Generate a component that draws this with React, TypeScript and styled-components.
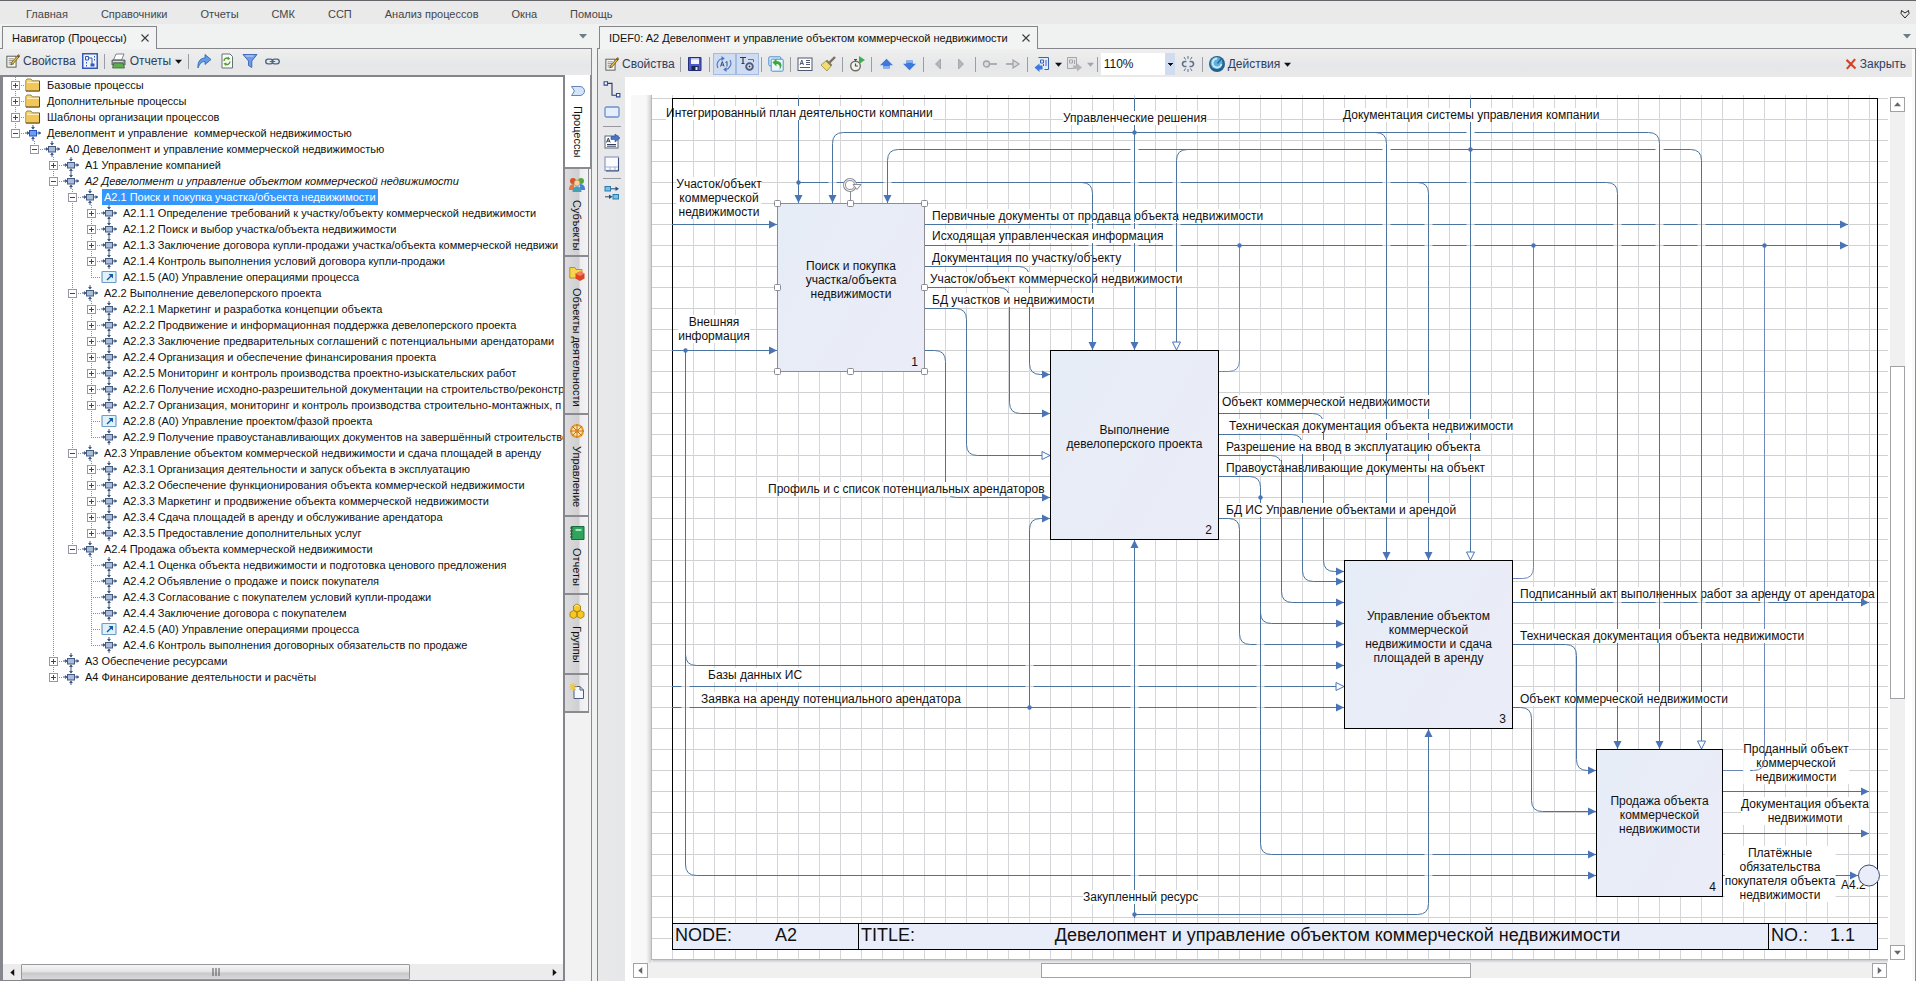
import React from "react";
import styled, { createGlobalStyle, css } from "styled-components";

const Global = createGlobalStyle`
  *, *::before, *::after { box-sizing: border-box; }
  html, body, #root { height: 100%; margin: 0; }
  body { overflow: hidden; background: #f0f0f0; }
  body, button, select { font-family: "Liberation Sans", Arial, sans-serif; font-size: 11px; color: #111; }
  button { border: 0; padding: 0; margin: 0; background: none; cursor: default; }
  svg { display: block; flex: none; }
`;

/* ---------- shell ---------- */

const Shell = styled.div`
  display: flex;
  flex-direction: column;
  height: 100vh;
  background: #f0f1f1;
`;

const MenuBar = styled.nav`
  display: flex;
  align-items: center;
  flex: none;
  height: 24px;
  padding: 2px 6px 0 10px;
  border-top: 1px solid #66666a;
  background: #e9eae9;
`;

const MenuItem = styled.button`
  padding: 0 17px 0 16px;
  line-height: 16px;
  color: #46464a;
`;

const MenuEnd = styled.button`
  margin-left: auto;
`;

const Workspace = styled.div`
  display: flex;
  flex: 1;
  gap: 5px;
  min-height: 0;
`;

const Dock = styled.section<{ $width?: number }>`
  display: flex;
  flex-direction: column;
  min-width: 0;
  min-height: 0;
  ${(p) => (p.$width ? css`flex: 0 0 ${p.$width}px;` : css`flex: 1;`)}
`;

const TabStrip = styled.div`
  display: flex;
  flex: none;
  height: 25px;
`;

const StripFill = styled.div<{ $lead?: boolean }>`
  display: flex;
  align-items: center;
  justify-content: flex-end;
  border-bottom: 1px solid #86868a;
  padding-right: 5px;
  ${(p) => (p.$lead ? css`width: 2px; flex: none; padding: 0;` : css`flex: 1;`)}
`;

const DockTab = styled.div`
  display: flex;
  align-items: center;
  gap: 14px;
  margin-top: 2px;
  padding: 0 7px 0 9px;
  border: 1px solid #86868a;
  border-bottom: 0;
  background: #f2f3f3;
  white-space: nowrap;
`;

const DockBody = styled.div`
  display: flex;
  flex-direction: column;
  flex: 1;
  min-height: 0;
  border-right: 1px solid #8a8a90;
`;

const DiagramBody = styled(DockBody)`
  border-left: 1px solid #86868a;
  padding-right: 3px;
  background: #fafafa;
`;

/* ---------- toolbars ---------- */

const Toolbar = styled.div<{ $tall?: boolean }>`
  display: flex;
  align-items: center;
  flex: none;
  height: ${(p) => (p.$tall ? 28 : 26)}px;
  padding: ${(p) => (p.$tall ? "2px 3px 0 4px" : "0 4px 2px 3px")};
  background: linear-gradient(#efefef, #e6e7e8 60%, #e9e9ea);
`;

const Tool = styled.button<{ $on?: boolean }>`
  display: flex;
  align-items: center;
  justify-content: center;
  width: 23px;
  height: 22px;
  ${(p) => p.$on && css`background: #cfdcf1; border: 1px solid #a3bde2;`}
`;

const TextTool = styled.button`
  display: flex;
  align-items: center;
  gap: 3px;
  padding: 0 3px;
  font-size: 12px;
  line-height: 22px;
  color: #2e4061;
`;

const CaretSlot = styled.span`
  display: flex;
  justify-content: center;
  width: 9px;
`;

const Rule = styled.span`
  width: 1px;
  height: 15px;
  margin: 0 3px 0 2px;
  background: #9c9ca2;
`;

const Push = styled.span`
  flex: 1;
`;

const Zoom = styled.select`
  appearance: none;
  width: 74px;
  height: 22px;
  margin-right: 2px;
  padding: 0 12px 0 3px;
  border: 0;
  border-radius: 0;
  font-size: 12px;
  background:
    linear-gradient(#111, #111) 67px 10px / 5px 1px no-repeat,
    linear-gradient(#111, #111) 68px 11px / 3px 1px no-repeat,
    linear-gradient(#111, #111) 69px 12px / 1px 1px no-repeat,
    linear-gradient(#d0dcf0, #d0dcf0) 64px 0 / 10px 100% no-repeat,
    #fff;
`;

/* ---------- navigator ---------- */

const NavRow = styled.div`
  display: flex;
  flex: 1;
  min-height: 0;
`;

const TreePane = styled.div`
  display: flex;
  flex-direction: column;
  flex: 1;
  min-width: 0;
  border: solid #85858d;
  border-width: 2px 2px 1px 3px;
  background: #fff;
`;

const TreeList = styled.div`
  flex: 1;
  overflow: hidden;
  padding-left: 3px;
`;

const Row = styled.div`
  display: flex;
  align-items: center;
  height: 16px;
  white-space: nowrap;
`;

const Guide = styled.span<{ $line: "full" | "half" | "none"; $stub?: boolean }>`
  display: flex;
  align-items: center;
  justify-content: center;
  flex: none;
  width: 19px;
  height: 16px;
  background:
    repeating-linear-gradient(#8c8c94 0 1px, transparent 1px 2px) 9px 0 / 1px
      ${(p) => (p.$line === "full" ? "16px" : p.$line === "half" ? "8px" : "0")} no-repeat,
    repeating-linear-gradient(90deg, #8c8c94 0 1px, transparent 1px 2px) 9px 8px /
      ${(p) => (p.$stub ? "10px" : "0")} 1px no-repeat;
`;

const Expander = styled.button<{ $open: boolean }>`
  width: 9px;
  height: 9px;
  border: 1px solid #9797a8;
  background:
    linear-gradient(#44445c, #44445c) center / 5px 1px no-repeat,
    linear-gradient(#44445c, #44445c) center / 1px ${(p) => (p.$open ? "0" : "5px")} no-repeat,
    #fff;
`;

const RowLabel = styled.span<{ $selected?: boolean; $italic?: boolean }>`
  margin-left: 4px;
  padding: 0 2px;
  line-height: 16px;
  white-space: pre;
  font-style: ${(p) => (p.$italic ? "italic" : "normal")};
  ${(p) => p.$selected && css`background: #3497fc; color: #fff;`}
`;

const SideTabs = styled.div`
  display: flex;
  flex-direction: column;
  flex: none;
  width: 26px;
  background: #f2f2f3;
`;

const SideTab = styled.button<{ $active?: boolean; $height: number }>`
  display: flex;
  align-items: center;
  gap: 7px;
  flex: none;
  writing-mode: vertical-rl;
  width: ${(p) => (p.$active ? 26 : 24)}px;
  height: ${(p) => p.$height}px;
  padding-top: 8px;
  border: solid #8a8a90;
  border-width: 0 1px 2px 0;
  line-height: 20px;
  background: ${(p) => (p.$active ? "#fff" : "linear-gradient(90deg, #dcdcde, #cfcfd2 62%, #ececee 64%, #f4f4f5)")};
`;

/* ---------- scroll bars ---------- */

const HScroll = styled.div`
  display: flex;
  flex: none;
  height: 16px;
  background: #ececed;
`;

const FlatButton = styled.button`
  display: grid;
  place-items: center;
  flex: none;
  width: 18px;
`;

const NavThumb = styled.div`
  display: grid;
  place-items: center;
  flex: 0 1 389px;
  border: 1px solid #98989c;
  border-radius: 1px;
  background: linear-gradient(#f5f5f5, #e6e6e6 45%, #c9c9cb 60%, #d9d9db);
`;

const BoxButton = styled.button`
  display: grid;
  place-items: center;
  flex: none;
  width: 15px;
  height: 15px;
  border: 1px solid #a2a2a6;
  background: #fff;
`;

const CanvasHScroll = styled.div`
  display: flex;
  flex: none;
  height: 15px;
  margin: 0 25px 3px 8px;
  background: #f0f0f1;
`;

const CanvasVScroll = styled.div`
  display: flex;
  flex-direction: column;
  flex: none;
  width: 15px;
  margin: 2px 7px 3px 2px;
  background: #f0f0f1;
`;

const Track = styled.div<{ $grow: number }>`
  flex: ${(p) => p.$grow} 1 0;
`;

const BoxThumb = styled.div<{ $grow: number }>`
  flex: ${(p) => p.$grow} 1 0;
  border: 1px solid #a2a2a6;
  background: #fff;
`;

/* ---------- diagram ---------- */

const CanvasRow = styled.div`
  display: flex;
  flex: 1;
  min-height: 0;
`;

const Palette = styled.div`
  display: flex;
  flex-direction: column;
  align-items: center;
  flex: none;
  width: 27px;
  background: linear-gradient(90deg, #e9e9eb, #e6e7e9);
`;

const PaletteTool = styled.button`
  display: grid;
  place-items: center;
  width: 23px;
  height: 23px;
`;

const PaletteRule = styled.span`
  width: 18px;
  height: 1px;
  margin: 3px 0 2px;
  background: #98989e;
`;

const Canvas = styled.div`
  display: flex;
  flex-direction: column;
  flex: 1;
  min-width: 0;
  padding-top: 18px;
  background: #fff;
`;

const SheetRow = styled.div`
  display: flex;
  flex: 1;
  min-height: 0;
`;

const SheetArea = styled.div`
  flex: 1;
  min-width: 0;
  margin-left: 6px;
  padding-left: 20px;
  overflow: hidden;
  background: linear-gradient(90deg, #f8f8f8 0 15px, #d8d8da 20px, #fff 20px);
`;

/* The sheet carries its own coordinate space; its top-left corner is (651, 95). */
const OX = 651;
const OY = 95;

const Sheet = styled.div`
  position: relative;
  width: 1238px;
  height: 865px;
  padding: 3px 0 0 21px;
  border-bottom: 1px solid #b4b4b8;
  box-shadow: 0 2px 3px #c8c8cc;
  background:
    linear-gradient(90deg, #b9b9bd 1px, transparent 1px) 0 0 / 100% 100% no-repeat,
    linear-gradient(90deg, #d5d6da 1px, transparent 1px) 0 0 / 21px 21px,
    linear-gradient(#cfd1d3 1px, transparent 1px) 0 3px / 21px 21px,
    #fff;
`;

const Frame = styled.div`
  display: flex;
  flex-direction: column;
  justify-content: flex-end;
  width: 1206px;
  height: 852px;
  border: 1px solid #000;
`;

const TitleBlock = styled.div`
  display: grid;
  grid-template-columns: 185px 1fr 109px;
  height: 26px;
  border-top: 1px solid #000;
  background: #e9edf9;
  font-size: 18px;
  line-height: 22px;
`;

const TitleCell = styled.div`
  display: flex;
  padding-left: 2px;
  & + & { border-left: 1px solid #000; }
`;

const TitleValue = styled.span<{ $after?: number }>`
  flex: 1;
  text-align: center;
  padding-right: ${(p) => p.$after || 0}px;
`;

const Layer = styled.svg`
  position: absolute;
  left: 0;
  top: 0;
  pointer-events: none;
`;

const Node = styled.div<{ $x: number; $y: number; $w: number; $h: number; $selected?: boolean }>`
  position: absolute;
  left: ${(p) => p.$x - OX}px;
  top: ${(p) => p.$y - OY}px;
  width: ${(p) => p.$w}px;
  height: ${(p) => p.$h}px;
  display: flex;
  flex-direction: column;
  border: 1px solid ${(p) => (p.$selected ? "#8c8c94" : "#000")};
  background: linear-gradient(120deg, #e6edf7, #ebecf8);
  font-size: 12px;
  line-height: 14px;
  text-align: center;
`;

const NodeText = styled.span`
  display: grid;
  place-content: center;
  flex: 1;
  white-space: pre-line;
`;

const NodeNumber = styled.span`
  height: 16px;
  padding-right: 6px;
  text-align: right;
`;

const FlowLabel = styled.span<{ $x: number; $y: number; $center?: boolean; $clear?: boolean }>`
  position: absolute;
  left: ${(p) => p.$x - OX}px;
  top: ${(p) => p.$y - OY}px;
  ${(p) => p.$center && css`transform: translateX(-50%); text-align: center;`}
  background: ${(p) => (p.$clear ? "transparent" : "#fff")};
  font-size: 12px;
  line-height: 14px;
  white-space: pre;
`;

/* ---------- icons ---------- */

type IconProps = { s?: number; children: React.ReactNode };
const Svg = ({ s = 16, children }: IconProps) => (
  <svg width={s} height={s} viewBox="0 0 16 16" fill="none" aria-hidden="true">{children}</svg>
);

const Caret = ({ c = "#111", dir = "down", s = 7 }: { c?: string; dir?: "down" | "up" | "left" | "right"; s?: number }) => {
  const d = { down: "M0 2H8L4 6.5Z", up: "M0 6H8L4 1.5Z", left: "M6 0V8L1.5 4Z", right: "M2 0V8L6.5 4Z" }[dir];
  return <svg width={s} height={s} viewBox="0 0 8 8" aria-hidden="true"><path d={d} fill={c} /></svg>;
};

const CloseX = () => (
  <svg width="8" height="8" viewBox="0 0 8 8" aria-hidden="true"><path d="M.5.5 7.5 7.5M7.5.5.5 7.5" stroke="#3c3c40" strokeWidth="1.1" /></svg>
);

const PropsIcon = () => (
  <Svg s={14}>
    <rect x="1" y="2.5" width="10.5" height="12.5" fill="#f6f6f2" stroke="#4c4c48" />
    <path d="M3 5.5h6M3 7.5h5M3 9.5h4M3 11.5h6" stroke="#8b8b80" />
    <path d="M14.6.6 6.5 9.5l-1 3 2.800-1.400L15.500 2.500Z" fill="#e6c043" stroke="#4d4420" strokeWidth=".8" />
    <path d="m13 1.800 2 2" stroke="#7a4a2a" strokeWidth="1.600" />
  </Svg>
);

const SchemeIcon = () => (
  <Svg>
    <rect x=".75" y=".75" width="14.500" height="14.500" fill="#f0f4fd" stroke="#3458b8" strokeWidth="1.500" />
    <path d="M3.500 3.500h3v3.500h-3ZM6.500 5H10v6" stroke="#3458b8" />
    <path d="M8.500 10.500h4v3h-4Z" fill="#3458b8" />
    <path d="M12.500 3v1.500M12.500 6v1.500M4.500 9v1.500M4.500 12v1.500" stroke="#3458b8" />
  </Svg>
);

const PrintIcon = () => (
  <Svg>
    <path d="M5 1h8l-2.500 6H2.500Z" fill="#fff" stroke="#667" strokeWidth=".8" />
    <path d="M1 7h13v5H1Z" fill="#8f979c" stroke="#4c5257" strokeWidth=".8" />
    <path d="M3 10h9l1.500 5H1.500Z" fill="#5cae4c" stroke="#3c6c34" strokeWidth=".8" />
    <path d="M2 8.500h10" stroke="#d6dadd" />
  </Svg>
);

const ForwardIcon = () => (
  <Svg><path d="M2 15C1.500 9 4 5 9 5V1.500l6 5-6 5V8.500C5.500 8.500 3.500 11 2 15Z" fill="#5f9be6" stroke="#2c5fae" strokeWidth=".8" /></Svg>
);

const RefreshDocIcon = () => (
  <Svg>
    <path d="M3 1h8l2.500 2.500V15H3Z" fill="#fafcf6" stroke="#66707a" />
    <path d="M5 8a3 3 0 0 1 4.500-2.500M11 8.500a3 3 0 0 1-4.500 2.500" stroke="#4d9c2c" strokeWidth="1.400" />
    <path d="M9 3.500 11.500 6 8.500 7ZM7 13 4.500 10.500 7.500 9.500Z" fill="#4d9c2c" />
  </Svg>
);

const FunnelIcon = () => (
  <Svg><path d="M1 1.500h14L9.800 8v6.500L6.500 12.500V8Z" fill="#6f9ce8" stroke="#3c62b4" strokeWidth=".9" /><path d="M3.500 3h8" stroke="#c8dafa" /></Svg>
);

const ChainIcon = () => (
  <Svg s={15}>
    <rect x=".8" y="5.500" width="7.500" height="5" rx="2.500" stroke="#4c6488" strokeWidth="1.500" />
    <rect x="7.700" y="5.500" width="7.500" height="5" rx="2.500" stroke="#4c6488" strokeWidth="1.500" />
    <path d="M5 8h6" stroke="#4c6488" />
  </Svg>
);

const SaveIcon = () => (
  <Svg>
    <path d="M1.500 1.500h12.500v13H1.500Z" fill="#4c5cc8" stroke="#252f7c" />
    <path d="M4 2h8v6H4Z" fill="#f5f6fc" /><path d="M4 2h8v1.500H4Z" fill="#b6bcec" />
    <path d="M4.500 10h7v4.500h-7Z" fill="#1c2452" /><path d="M8.500 11h2v3h-2Z" fill="#e8eaf6" />
  </Svg>
);

const AutoNumberIcon = () => (
  <Svg>
    <path d="M6 2.500A6.500 6.500 0 0 0 2 12M10 13.500A6.500 6.500 0 0 0 14 4" stroke="#4776c8" strokeWidth="1.100" />
    <path d="M5.500 0 8.800 2.500 5.500 5ZM10.500 11 7.200 13.500 10.500 16Z" fill="#4776c8" />
    <path d="m4.500 10.500 1.800-5 1.800 5M5 9h2.600M9.500 6.500l1.500-1v5" stroke="#34507e" strokeWidth="1" />
  </Svg>
);

const TextGearIcon = () => (
  <Svg>
    <path d="M1 1.500h6M4 1.500v6M2.500 7.500h3" stroke="#333a48" strokeWidth="1.200" />
    <circle cx="10.500" cy="10.500" r="3.300" fill="#eef2fb" stroke="#4c5d80" strokeWidth="2" />
    <circle cx="10.500" cy="10.500" r="1" fill="#26344f" />
    <path d="M9 3.500h5.500V6" stroke="#4776c8" />
  </Svg>
);

const SwapIcon = () => (
  <Svg>
    <rect x=".8" y=".8" width="12" height="9" rx="1" fill="#d8ebfb" stroke="#4c92ce" />
    <rect x="3.200" y="3.200" width="12" height="12" rx="1" fill="#eff7fe" stroke="#4c92ce" />
    <path d="M11.500 14c1-4-.5-6-3-6v2.500L4.500 6.500 8.500 2.500V5c4.500 0 7 4 3 9Z" fill="#3ea63a" />
  </Svg>
);

const TextFrameIcon = () => (
  <Svg>
    <rect x="1" y="2" width="14" height="12.500" fill="#fff" stroke="#4c5a70" />
    <path d="m3 9 1.800-5L6.500 9M3.500 7.500h2.500M9 4.500h4M9 6.500h4M9 8.500h4M3 11.500h10" stroke="#3f4c66" strokeWidth=".9" />
  </Svg>
);

const BrushIcon = () => (
  <Svg>
    <path d="M15 1 9.500 6.500" stroke="#7d6f5c" strokeWidth="2.400" />
    <path d="M6.500 4.500 11.500 9.500 7 15 1 9Z" fill="#f0dc72" stroke="#9c8a34" strokeWidth=".8" />
    <path d="m6.500 4.500 5 5" stroke="#77756c" strokeWidth="1.800" />
  </Svg>
);

const TimerIcon = () => (
  <Svg>
    <circle cx="6.500" cy="10" r="4.800" fill="#f3f3f0" stroke="#6c6c66" strokeWidth="1.400" />
    <path d="M5 3.500h3M6.500 3.500V5M6.500 7.500V10h2.500" stroke="#4c4c48" strokeWidth="1.200" />
    <path d="M10 0v8l6-4Z" fill="#3fae4c" />
  </Svg>
);

const UpIcon = () => <Svg s={13}><path d="M8 1 16 9h-4v4H4V9H0Z" fill="#3d78dc" /><path d="M4 10h8v3H4Z" fill="#8ab2ee" /></Svg>;
const DownIcon = () => <Svg s={13}><path d="M8 15 16 7h-4V3H4v4H0Z" fill="#3d78dc" /><path d="M4 3h8v3H4Z" fill="#8ab2ee" /></Svg>;
const BackIcon = () => <Svg><path d="M10.500 3v10L5.500 8Z" fill="#b4b4ba" stroke="#98989e" strokeWidth=".7" /></Svg>;
const NextIcon = () => <Svg><path d="M5.500 3v10l5-5Z" fill="#b4b4ba" stroke="#98989e" strokeWidth=".7" /></Svg>;
const StartIcon = () => <Svg><circle cx="4.500" cy="8" r="3" fill="#dcdcde" stroke="#a0a0a6" strokeWidth="1.300" /><path d="M7.500 8H15" stroke="#a0a0a6" strokeWidth="1.600" /></Svg>;
const EndIcon = () => <Svg><path d="M1 8h7" stroke="#a0a0a6" strokeWidth="1.600" /><path d="M8 4v8l6-4Z" fill="#dcdcde" stroke="#a0a0a6" strokeWidth="1.200" /></Svg>;

const ImportIcon = () => (
  <Svg>
    <path d="M4.500 1.500h10v12h-4" fill="#e4ebfa" stroke="#3c62b4" />
    <path d="M6.500 4h3v3h-3ZM12 4v6M9.500 8v2" stroke="#3c62b4" />
    <path d="M8.500 9.500v4h-3V16L.5 11.500 5.500 7.500v2Z" fill="#3d78dc" />
  </Svg>
);

const ExportIcon = () => (
  <Svg>
    <path d="M1.500 1.500h9v11h-9Z" fill="#e4e4e6" stroke="#a4a4aa" />
    <path d="M3.500 4h3v3h-3ZM8.500 4v4" stroke="#a4a4aa" />
    <path d="M7 9.500h4V7.500l5 4-5 4v-2.500H7Z" fill="#b4b4ba" />
  </Svg>
);

const UnlinkIcon = () => (
  <Svg>
    <path d="M6.500 5.500H5a2.500 2.500 0 0 0 0 5h1.500M9.500 10.500H11a2.500 2.500 0 0 0 0-5H9.500" stroke="#5c7090" strokeWidth="1.600" />
    <path d="M8 0v3M4 1l1.500 2.500M12 1l-1.500 2.500M8 16v-3M4 15l1.500-2.500M12 15l-1.500-2.500" stroke="#5c7090" />
  </Svg>
);

const GlobeIcon = () => (
  <Svg>
    <circle cx="8" cy="8" r="8" fill="#24618f" /><circle cx="7.500" cy="7" r="6" fill="#5fb0da" />
    <path d="M8 2.500A4.500 4.500 0 1 0 12.500 8" stroke="#cfe8f5" strokeWidth="1.800" /><path d="M12 3 8.500 7.500" stroke="#276a9c" strokeWidth="1.500" />
  </Svg>
);

const RedXIcon = () => <Svg s={12}><path d="M2 2.500 14 14M13.500 1.500 2.500 14.500" stroke="#cf4326" strokeWidth="2.800" /></Svg>;

const ConnectorIcon = () => <Svg s={18}><path d="M4.500 3H8v10.500h4" stroke="#2c3c60" /><path d="M1 1.500h3v3H1ZM12 12h3v3h-3Z" fill="#fff" stroke="#2c4c94" /></Svg>;
const BlockIcon = () => <Svg><rect x="1" y="3" width="14" height="10" rx="1.500" fill="#e4eeff" stroke="#6c90cc" strokeWidth="1.300" /></Svg>;
const RelabelIcon = () => (
  <Svg>
    <rect x="1" y="3" width="13" height="12" fill="#fff" stroke="#59657a" />
    <path d="m2.500 9.500 1.800-4.500 1.800 4.500M3 8.200h2.500M3 11.500h9M3 13.200h9" stroke="#333f58" />
    <path d="M7 3.500h4V1l5 4-5 4V6.500H7Z" fill="#4577cc" stroke="#244a90" strokeWidth=".6" />
  </Svg>
);
const StampIcon = () => <Svg><rect x="1" y="1" width="13.500" height="13.500" fill="#f9fbff" stroke="#8c9cc0" strokeWidth="1.200" /><path d="M1 11h13.500M6 11v3.500M11 11v3.500" stroke="#a4b0c8" /><path d="M14.500 2v13H2" stroke="#3c4c78" /></Svg>;
const LinkBoxesIcon = () => (
  <Svg>
    <rect x="1" y="1.500" width="5.500" height="4.500" fill="#7cc0e4" stroke="#2a7cac" /><path d="M7 3.800h6" stroke="#2c4c7c" /><path d="m11.500 1.500 3.500 2.300-3.500 2.300Z" fill="#2c4c7c" />
    <rect x="9" y="9.500" width="5.500" height="4.500" fill="#7cc0e4" stroke="#2a7cac" /><path d="M1 11.800h5" stroke="#2c4c7c" /><path d="m5 9.500 3.500 2.300L5 14Z" fill="#2c4c7c" />
  </Svg>
);

const FolderIcon = () => (
  <Svg>
    <path d="M.8 3.500 2 2h4l1.200 1.800H14.500V14H.8Z" fill="#f6d774" stroke="#8a6a24" strokeWidth=".8" />
    <path d="M1.500 5.500h12.500v8H1.500Z" fill="#f2c75a" /><path d="M14.500 4v10H1" stroke="#5c4618" />
    <path d="M2 5.500h12" stroke="#fdf0bc" />
  </Svg>
);

const ProcessIcon = ({ root }: { root?: boolean }) => (
  <Svg>
    <path d="M8 0v4M8 12v4M0 8h4M12 8h4" stroke="#3b5688" />
    <path d="M6 2h4L8 4.500ZM6 14h4l-2-2.500ZM2 6v4l2.500-2ZM13.500 6v4L16 8Z" fill="#3b5688" />
    <rect x="4.500" y="5.500" width="7" height="5.500" fill={root ? "#6f9cf0" : "#a8bcdc"} stroke={root ? "#2452c0" : "#46587c"} />
  </Svg>
);

const RefIcon = () => (
  <Svg>
    <rect x="1" y="2.500" width="14" height="11" rx=".8" fill="#dff1fb" stroke="#6f9cc4" strokeWidth="1.200" />
    <path d="M6 11 10.500 6.500" stroke="#145ca0" strokeWidth="1.400" /><path d="M7.500 5h4.500v4.500Z" fill="#145ca0" />
  </Svg>
);

const ChevronDocIcon = () => <Svg><path d="M1.500 3.500H10C13 3.500 14.500 6 14.500 8s-1.500 4.500-4.500 4.500H1.500L4.500 8Z" fill="#d4e4fa" stroke="#6484b8" /></Svg>;
const PeopleIcon = () => (
  <Svg>
    <circle cx="4" cy="4" r="3" fill="#d8542c" /><circle cx="12" cy="4" r="3" fill="#54a83c" />
    <path d="M0 12c0-4 3-5 5-5v6H0Z" fill="#e8743c" /><path d="M16 12c0-4-3-5-5-5v6h5Z" fill="#4c80d8" />
    <circle cx="8" cy="6" r="3" fill="#f6d2a0" stroke="#b08040" strokeWidth=".6" />
    <path d="M3.500 15c0-4 2-5.500 4.500-5.500s4.500 1.500 4.500 5.500Z" fill="#44a0b8" />
  </Svg>
);
const ObjectsIcon = () => (
  <Svg>
    <path d="M.8 2.500h5L7 4.500h6V13H.8Z" fill="#f8d44c" stroke="#b08a1c" strokeWidth=".9" />
    <path d="m11 6.500 4.500 2v5L11 16l-4.500-2.500v-5Z" fill="#dc4424" /><path d="m11 6.500 4.500 2L11 11 6.500 8.500Z" fill="#f4805c" />
  </Svg>
);
const WheelIcon = () => (
  <Svg><circle cx="8" cy="8" r="6" fill="#fce6b0" stroke="#e89a2c" strokeWidth="2" /><path d="M8 1v14M1 8h14M3 3l10 10M13 3 3 13" stroke="#c8701c" /><circle cx="8" cy="8" r="1.800" fill="#d8801c" /></Svg>
);
const BookIcon = () => <Svg><path d="M2.500 1.500H15v13H2.500Z" fill="#2fa45c" stroke="#176c38" /><path d="M6.500 4h6v2h-6Z" fill="#a8e4bc" /><path d="M1 3h3M1 6h3M1 9h3M1 12h3" stroke="#3c4c44" /></Svg>;
const GroupsIcon = () => (
  <Svg><path d="m8 1 3.500 2v4L8 9 4.500 7V3ZM4.500 7.500 8 9.500v4L4.500 15.500 1 13.500v-4ZM11.500 7.500 15 9.500v4l-3.500 2-3.500-2v-4Z" fill="#f6c822" stroke="#a8800c" strokeWidth=".9" /><path d="M5.500 3.500 8 2l2 1.500" stroke="#fdeea0" /></Svg>
);
const NewPageIcon = () => (
  <Svg><path d="M5 3.500h6l3.500 3.500v8.500H5Z" fill="#f4f8ff" stroke="#4c5c80" /><path d="M14.500 7H11V3.500" stroke="#4c5c80" /><path d="M4 0v8M0 4h8M1.200 1.200l5.600 5.600M6.800 1.200 1.200 6.800" stroke="#f0c83c" strokeWidth="1.200" /></Svg>
);

/* ---------- data ---------- */

type Kind = "folder" | "root" | "process" | "ref";
type Item = { t: string; k?: Kind; leaf?: boolean; sel?: boolean; it?: boolean; kids?: Item[] };

const closed = (t: string): Item => ({ t });
const leaf = (t: string): Item => ({ t, leaf: true });
const ref = (t: string): Item => ({ t, leaf: true, k: "ref" });

const TREE: Item[] = [
  { t: "Базовые процессы", k: "folder" },
  { t: "Дополнительные процессы", k: "folder" },
  { t: "Шаблоны организации процессов", k: "folder" },
  {
    t: "Девелопмент и управление  коммерческой недвижимостью", k: "root", kids: [
      {
        t: "A0 Девелопмент и управление коммерческой недвижимостью", kids: [
          closed("A1 Управление компанией"),
          {
            t: "A2 Девелопмент и управление объектом коммерческой недвижимости", it: true, kids: [
              {
                t: "A2.1 Поиск и покупка участка/объекта недвижимости", sel: true, kids: [
                  closed("A2.1.1 Определение требований к участку/объекту коммерческой недвижимости"),
                  closed("A2.1.2 Поиск и выбор участка/объекта недвижимости"),
                  closed("A2.1.3 Заключение договора купли-продажи участка/объекта коммерческой недвижи"),
                  closed("A2.1.4 Контроль выполнения условий договора купли-продажи"),
                  ref("A2.1.5 (A0) Управление операциями процесса"),
                ],
              },
              {
                t: "A2.2 Выполнение девелоперского проекта", kids: [
                  closed("A2.2.1 Маркетинг и разработка концепции объекта"),
                  closed("A2.2.2 Продвижение и информационная поддержка девелоперского проекта"),
                  closed("A2.2.3 Заключение предварительных соглашений с потенциальными арендаторами"),
                  closed("A2.2.4 Организация и обеспечение финансирования проекта"),
                  closed("A2.2.5 Мониторинг и контроль производства проектно-изыскательских работ"),
                  closed("A2.2.6 Получение исходно-разрешительной документации на строительство/реконстр"),
                  closed("A2.2.7 Организация, мониторинг и контроль производства строительно-монтажных, п"),
                  ref("A2.2.8 (A0) Управление проектом/фазой проекта"),
                  leaf("A2.2.9 Получение правоустанавливающих документов на завершённый строительство"),
                ],
              },
              {
                t: "A2.3 Управление объектом коммерческой недвижимости и сдача площадей в аренду", kids: [
                  closed("A2.3.1 Организация деятельности и запуск объекта в эксплуатацию"),
                  closed("A2.3.2 Обеспечение функционирования объекта коммерческой недвижимости"),
                  closed("A2.3.3 Маркетинг и продвижение объекта коммерческой недвижимости"),
                  closed("A2.3.4 Сдача площадей в аренду и обслуживание арендатора"),
                  closed("A2.3.5 Предоставление дополнительных услуг"),
                ],
              },
              {
                t: "A2.4 Продажа объекта коммерческой недвижимости", kids: [
                  leaf("A2.4.1 Оценка объекта недвижимости и подготовка ценового предложения"),
                  leaf("A2.4.2 Объявление о продаже и поиск покупателя"),
                  leaf("A2.4.3 Согласование с покупателем условий купли-продажи"),
                  leaf("A2.4.4 Заключение договора с покупателем"),
                  ref("A2.4.5 (A0) Управление операциями процесса"),
                  leaf("A2.4.6 Контроль выполнения договорных обязательств по продаже"),
                ],
              },
            ],
          },
          closed("A3 Обеспечение ресурсами"),
          closed("A4 Финансирование деятельности и расчёты"),
        ],
      },
    ],
  },
];

const kindIcon = (k?: Kind) =>
  k === "folder" ? <FolderIcon /> : k === "ref" ? <RefIcon /> : <ProcessIcon root={k === "root"} />;

const Branch = ({ items, trail = [] }: { items: Item[]; trail?: boolean[] }) => (
  <>
    {items.map((n, i) => {
      const last = i === items.length - 1;
      return (
        <React.Fragment key={n.t}>
          <Row role="treeitem" aria-level={trail.length + 1} aria-selected={!!n.sel}>
            {trail.map((on, j) => <Guide key={j} $line={on ? "full" : "none"} />)}
            <Guide $line={last ? "half" : "full"} $stub>
              {!n.leaf && <Expander $open={!!n.kids} aria-label={n.kids ? "Свернуть" : "Развернуть"} />}
            </Guide>
            {kindIcon(n.k)}
            <RowLabel $selected={n.sel} $italic={n.it}>{n.t}</RowLabel>
          </Row>
          {n.kids && <Branch items={n.kids} trail={[...trail, !last]} />}
        </React.Fragment>
      );
    })}
  </>
);

const SIDE = [
  { t: "Процессы", h: 94, icon: <ChevronDocIcon /> },
  { t: "Субъекты", h: 88, icon: <PeopleIcon /> },
  { t: "Объекты деятельности", h: 158, icon: <ObjectsIcon /> },
  { t: "Управление", h: 102, icon: <WheelIcon /> },
  { t: "Отчеты", h: 78, icon: <BookIcon /> },
  { t: "Группы", h: 80, icon: <GroupsIcon /> },
];

/* ---------- diagram geometry ---------- */

const LINE = "#4a749f";
const SOFT = "#6f86bd";
const HEAD = "#4a74b6";
const R = 11;

/* Horizontal run from a to b, broken by a small gap at every crossing. */
const run = (y: number, a: number, b: number, gaps: number[] = []) => {
  let d = `M${a} ${y}`;
  gaps.forEach((g) => { d += `H${g - 4}M${g + 4} ${y}`; });
  return d + `H${b}`;
};

/* Right from (a, y1), rounded turn down at x, rounded turn right at y2, on to b. */
const step = (a: number, y1: number, x: number, y2: number, b: number, gaps: number[] = []) =>
  `M${a} ${y1}H${x - R}Q${x} ${y1} ${x} ${y1 + R}V${y2 - R}Q${x} ${y2} ${x + R} ${y2}` + run(y2, x + R, b, gaps);

/* Branch leaving a horizontal line at y and dropping at x; side -1 comes from the left. */
const drop = (y: number, x: number, to: number, side = -1) => `M${x + side * R} ${y}Q${x} ${y} ${x} ${y + R}V${to}`;

/* Branch leaving a vertical line at x and running right along y. */
const peel = (x: number, y: number, b: number, gaps: number[] = []) =>
  `M${x} ${y - R}Q${x} ${y} ${x + R} ${y}` + run(y, x + R, b, gaps);

const DOWNS = [1092.5, 1134.5, 1176.5, 1386.5, 1428.5, 1470.5, 1617.5, 1659.5, 1701.5];

const FLOWS = [
  "M798.5 98V203",
  "M1134.5 98V350",
  "M1470.5 98V560",
  run(182.5, 798.5, 1617.5 - R, [832.5, 887.5, 1134.5, 1176.5, 1386.5, 1470.5]),
  drop(182.5, 1092.5, 350), drop(182.5, 1428.5, 560), drop(182.5, 1617.5, 749),
  run(132.5, 832.5 + R, 1659.5 - R, [1470.5]),
  drop(132.5, 832.5, 203, 1), drop(132.5, 1386.5, 560), drop(132.5, 1659.5, 749),
  run(149.5, 887.5 + R, 1701.5 - R, [1134.5, 1386.5, 1659.5]),
  drop(149.5, 887.5, 203, 1), drop(149.5, 1176.5, 350, 1), drop(149.5, 1701.5, 749),
  run(224.5, 672, 777), run(350.5, 672, 777),
  "M685.5 350V865", peel(685.5, 665.5, 1344, [1029.5, 1134.5, 1260.5]), peel(685.5, 875.5, 1596, [1134.5, 1428.5]),
  run(686.5, 672, 1344, [685.5, 1029.5, 1134.5, 1260.5]),
  run(707.5, 672, 1344, [685.5, 1134.5, 1260.5]),
  `M1029.5 707V529.5Q1029.5 518.5 1040.5 518.5H1050`,
  "M1134.5 918V540",
  `M1134 914.5H${1428.5 - R}Q1428.5 914.5 1428.5 903.5V729`,
  run(224.5, 925, 1848, DOWNS), run(245.5, 925, 1848, DOWNS),
  step(925, 266.5, 1029.5, 374.5, 1050), step(925, 287.5, 1009.5, 413.5, 1050),
  step(925, 308.5, 966.5, 455.5, 1050), step(925, 350.5, 945.5, 497.5, 1050),
  step(1219, 413.5, 1323.5, 571.5, 1344), step(1219, 434.5, 1302.5, 581.5, 1344),
  step(1219, 455.5, 1281.5, 602.5, 1344), step(1219, 476.5, 1260.5, 854.5, 1596, [1428.5]),
  peel(1260.5, 623.5, 1344), step(1219, 518.5, 1239.5, 644.5, 1344, [1260.5]),
  run(602.5, 1513, 1869, [1617.5, 1659.5, 1701.5, 1764.5]),
  step(1513, 644.5, 1576.5, 770.5, 1596), step(1513, 707.5, 1531.5, 811.5, 1596),
  run(791.5, 1723, 1869), run(833.5, 1723, 1869), run(875.5, 1723, 1859),
];

const RETURNS = [
  "M1219 371.5H1228.5Q1239.5 371.5 1239.5 360.5V245",
  "M1513 578.5H1522.5Q1533.5 578.5 1533.5 567.5V245",
  "M1723 770.5H1753.5Q1764.5 770.5 1764.5 759.5V245",
];

/* Stretches that run over a label instead of behind it. */
const OVER = [
  "M1092.5 208V222M1092.5 250V290M1134.5 208V222M1176.5 208V222",
  "M1386.5 394V409M1281.5 460V475M1302.5 460V475M1281.5 502V517",
  "M1617.5 586V601M1659.5 586V601M1701.5 586V601M1576.5 690V706",
];
const OVER_SOFT = "M1764.5 586V601M1764.5 741V759.5Q1764.5 770.5 1753.5 770.5H1750";

const SOLID: [number, number, "d" | "u" | "r"][] = [
  [798.5, 203, "d"], [832.5, 203, "d"], [887.5, 203, "d"], [1092.5, 350, "d"], [1134.5, 350, "d"],
  [1386.5, 560, "d"], [1428.5, 560, "d"], [1617.5, 749, "d"], [1659.5, 749, "d"],
  [1134.5, 540, "u"], [1428.5, 729, "u"],
  [777, 224.5, "r"], [777, 350.5, "r"], [1848, 224.5, "r"], [1848, 245.5, "r"],
  [1050, 374.5, "r"], [1050, 413.5, "r"], [1050, 497.5, "r"], [1050, 518.5, "r"],
  [1344, 571.5, "r"], [1344, 581.5, "r"], [1344, 602.5, "r"], [1344, 623.5, "r"], [1344, 644.5, "r"],
  [1344, 665.5, "r"], [1344, 707.5, "r"], [1869, 602.5, "r"],
  [1596, 770.5, "r"], [1596, 811.5, "r"], [1596, 854.5, "r"], [1596, 875.5, "r"],
  [1869, 791.5, "r"], [1869, 833.5, "r"], [1858, 875.5, "r"],
];
const HOLLOW: [number, number, "d" | "u" | "r"][] = [
  [1176.5, 350, "d"], [1470.5, 560, "d"], [1701.5, 749, "d"], [1050, 455.5, "r"], [1344, 686.5, "r"],
];
const headPath = (x: number, y: number, dir: "d" | "u" | "r") =>
  dir === "d" ? `M${x - 4} ${y - 8}h8L${x} ${y}Z` : dir === "u" ? `M${x - 4} ${y + 8}h8L${x} ${y}Z` : `M${x - 8} ${y - 4}v8L${x} ${y}Z`;

const DOTS = [
  [798.5, 182.5], [1134.5, 132.5], [1470.5, 149.5], [685.5, 350.5], [1239.5, 245.5], [1533.5, 245.5],
  [1764.5, 245.5], [1260.5, 497.5], [1029.5, 707.5], [1134.5, 914.5],
];

const LABELS: { x: number; y: number; t: string; c?: boolean; clear?: boolean }[] = [
  { x: 666, y: 106, t: "Интегрированный план деятельности компании" },
  { x: 1063, y: 111, t: "Управленческие решения" },
  { x: 1343, y: 108, t: "Документация системы управления компании" },
  { x: 719, y: 177, t: "Участок/объект\nкоммерческой\nнедвижимости", c: true },
  { x: 932, y: 209, t: "Первичные документы от продавца объекта недвижимости" },
  { x: 932, y: 229, t: "Исходящая управленческая информация" },
  { x: 932, y: 251, t: "Документация по участку/объекту" },
  { x: 930, y: 272, t: "Участок/объект коммерческой недвижимости" },
  { x: 932, y: 293, t: "БД участков и недвижимости" },
  { x: 714, y: 315, t: "Внешняя\nинформация", c: true },
  { x: 768, y: 482, t: "Профиль и с список потенциальных арендаторов" },
  { x: 1222, y: 395, t: "Объект коммерческой недвижимости" },
  { x: 1229, y: 419, t: "Техническая документация объекта недвижимости" },
  { x: 1226, y: 440, t: "Разрешение на ввод в эксплуатацию объекта" },
  { x: 1226, y: 461, t: "Правоустанавливающие документы на объект" },
  { x: 1226, y: 503, t: "БД ИС Управление объектами и арендой" },
  { x: 1520, y: 587, t: "Подписанный акт выполненных работ за аренду от арендатора" },
  { x: 1520, y: 629, t: "Техническая документация объекта недвижимости" },
  { x: 1520, y: 692, t: "Объект коммерческой недвижимости" },
  { x: 708, y: 668, t: "Базы данных ИС" },
  { x: 701, y: 692, t: "Заявка на аренду потенциального арендатора" },
  { x: 1083, y: 890, t: "Закупленный ресурс" },
  { x: 1796, y: 742, t: "Проданный объект\nкоммерческой\nнедвижимости", c: true },
  { x: 1805, y: 797, t: "Документация объекта\nнедвижимоти", c: true },
  { x: 1780, y: 846, t: "Платёжные\nобязательства\nпокупателя объекта\nнедвижимости", c: true },
  { x: 1841, y: 878, t: "A4.2", clear: true },
];

const NODES = [
  { x: 777, y: 203, w: 148, h: 169, n: 1, t: "Поиск и покупка\nучастка/объекта\nнедвижимости", sel: true },
  { x: 1050, y: 350, w: 169, h: 190, n: 2, t: "Выполнение\nдевелоперского проекта" },
  { x: 1344, y: 560, w: 169, h: 169, n: 3, t: "Управление объектом\nкоммерческой\nнедвижимости и сдача\nплощадей в аренду" },
  { x: 1596, y: 749, w: 127, h: 148, n: 4, t: "Продажа объекта\nкоммерческой\nнедвижимости" },
];

const HANDLES = [[777.5, 203.5], [850.5, 203.5], [924.5, 203.5], [777.5, 287.5], [924.5, 287.5], [777.5, 371.5], [850.5, 371.5], [924.5, 371.5]];

const DiagramLayer = ({ children }: { children: React.ReactNode }) => (
  <Layer width="1238" height="865" viewBox={`${OX} ${OY} 1238 865`} fill="none" aria-hidden="true">{children}</Layer>
);

const Diagram = () => (
  <Sheet>
    <Frame>
      <TitleBlock>
        <TitleCell>NODE:<TitleValue $after={18}>A2</TitleValue></TitleCell>
        <TitleCell>TITLE:<TitleValue $after={8}>Девелопмент и управление объектом коммерческой недвижимости</TitleValue></TitleCell>
        <TitleCell>NO.:<TitleValue>1.1</TitleValue></TitleCell>
      </TitleBlock>
    </Frame>
    <DiagramLayer>
      {FLOWS.map((d) => <path key={d} d={d} stroke={LINE} />)}
      {RETURNS.map((d) => <path key={d} d={d} stroke={SOFT} />)}
      {DOTS.map(([x, y]) => <circle key={`${x}-${y}`} cx={x} cy={y} r="2.2" fill={HEAD} />)}
    </DiagramLayer>
    {LABELS.map((l) => <FlowLabel key={`${l.x}-${l.y}`} $x={l.x} $y={l.y} $center={l.c} $clear={l.clear}>{l.t}</FlowLabel>)}
    {NODES.map((n) => (
      <Node key={n.n} $x={n.x} $y={n.y} $w={n.w} $h={n.h} $selected={n.sel}>
        <NodeText>{n.t}</NodeText>
        <NodeNumber>{n.n}</NodeNumber>
      </Node>
    ))}
    <DiagramLayer>
      <path d="M672.5 98V130" stroke="#000" />
      {OVER.map((d) => <path key={d} d={d} stroke={LINE} />)}
      <path d={OVER_SOFT} stroke={SOFT} />
      {SOLID.map(([x, y, d]) => <path key={`${x}-${y}`} d={headPath(x, y, d)} fill={HEAD} />)}
      {HOLLOW.map(([x, y, d]) => <path key={`${x}-${y}`} d={headPath(x, y, d)} fill="#fff" stroke={HEAD} />)}
      <circle cx="1869" cy="875.5" r="10.5" fill="#e9edf9" stroke="#3c4c78" />
      <path d="M850.5 190V203" stroke="#8c8c94" />
      <circle cx="850" cy="185" r="5.5" fill="#fff" stroke="#8c8c94" strokeWidth="3" />
      <circle cx="850" cy="185" r="5.5" stroke="#fff" />
      <path d="M853 184.5h8l-4 5Z" fill="#fff" stroke="#8c8c94" />
      {HANDLES.map(([x, y]) => <rect key={`${x}-${y}`} x={x - 3} y={y - 3} width="6" height="6" rx="1" fill="#fff" stroke="#8c8c94" />)}
    </DiagramLayer>
  </Sheet>
);

/* ---------- page ---------- */

const T = ({ n, on, children }: { n: string; on?: boolean; children: React.ReactNode }) => (
  <Tool type="button" aria-label={n} $on={on}>{children}</Tool>
);

export default function App() {
  return (
    <Shell>
      <Global />
      <MenuBar>
        {["Главная", "Справочники", "Отчеты", "СМК", "ССП", "Анализ процессов", "Окна", "Помощь"].map((m) => (
          <MenuItem key={m} type="button">{m}</MenuItem>
        ))}
        <MenuEnd type="button" aria-label="Свернуть меню">
          <svg width="10" height="10" viewBox="0 0 10 10" fill="none"><path d="M5 9 1 4.5 1.5 1.5 5 4 8.5 1.500 9 4.500Z" stroke="#222" /></svg>
        </MenuEnd>
      </MenuBar>
      <Workspace>
        <Dock $width={592}>
          <TabStrip>
            <StripFill $lead />
            <DockTab>Навигатор (Процессы)<button type="button" aria-label="Закрыть вкладку"><CloseX /></button></DockTab>
            <StripFill><Caret c="#6c7c88" s={8} /></StripFill>
          </TabStrip>
          <DockBody>
            <Toolbar>
              <TextTool type="button"><PropsIcon />Свойства</TextTool>
              <T n="Схема"><SchemeIcon /></T>
              <Rule />
              <TextTool type="button"><PrintIcon />Отчеты<CaretSlot><Caret /></CaretSlot></TextTool>
              <Rule />
              <T n="Перейти"><ForwardIcon /></T>
              <T n="Обновить"><RefreshDocIcon /></T>
              <T n="Фильтр"><FunnelIcon /></T>
              <T n="Связь"><ChainIcon /></T>
            </Toolbar>
            <NavRow>
              <TreePane>
                <TreeList role="tree"><Branch items={TREE} /></TreeList>
                <HScroll>
                  <FlatButton type="button" aria-label="Влево"><Caret dir="left" /></FlatButton>
                  <NavThumb><svg width="8" height="8" viewBox="0 0 8 8"><path d="M1 0v8M4 0v8M7 0v8" stroke="#55555a" /></svg></NavThumb>
                  <Push />
                  <FlatButton type="button" aria-label="Вправо"><Caret dir="right" /></FlatButton>
                </HScroll>
              </TreePane>
              <SideTabs role="tablist">
                {SIDE.map((s, i) => (
                  <SideTab key={s.t} type="button" role="tab" aria-selected={i === 0} $active={i === 0} $height={s.h}>{s.icon}{s.t}</SideTab>
                ))}
                <SideTab type="button" role="tab" aria-label="Новая вкладка" $height={38}><NewPageIcon /></SideTab>
              </SideTabs>
            </NavRow>
          </DockBody>
        </Dock>
        <Dock>
          <TabStrip>
            <StripFill $lead />
            <DockTab>IDEF0: A2 Девелопмент и управление объектом коммерческой недвижимости<button type="button" aria-label="Закрыть вкладку"><CloseX /></button></DockTab>
            <StripFill><Caret c="#6c7c88" s={8} /></StripFill>
          </TabStrip>
          <DiagramBody>
            <Toolbar $tall>
              <TextTool type="button"><PropsIcon />Свойства</TextTool>
              <Rule />
              <T n="Сохранить"><SaveIcon /></T>
              <Rule />
              <T n="Автонумерация" on><AutoNumberIcon /></T>
              <T n="Настройка текста" on><TextGearIcon /></T>
              <Rule />
              <T n="Обновить"><SwapIcon /></T>
              <Rule />
              <T n="Надпись"><TextFrameIcon /></T>
              <T n="Формат"><BrushIcon /></T>
              <Rule />
              <T n="Имитация"><TimerIcon /></T>
              <Rule />
              <T n="Вверх"><UpIcon /></T>
              <T n="Вниз"><DownIcon /></T>
              <Rule />
              <T n="Назад"><BackIcon /></T>
              <T n="Вперед"><NextIcon /></T>
              <Rule />
              <T n="Начало"><StartIcon /></T>
              <T n="Конец"><EndIcon /></T>
              <Rule />
              <T n="Импорт"><ImportIcon /></T>
              <CaretSlot><Caret /></CaretSlot>
              <T n="Экспорт"><ExportIcon /></T>
              <CaretSlot><Caret c="#a4a4aa" /></CaretSlot>
              <Rule />
              <Zoom aria-label="Масштаб" defaultValue="110%"><option>110%</option></Zoom>
              <T n="Разорвать связь"><UnlinkIcon /></T>
              <Rule />
              <TextTool type="button"><GlobeIcon />Действия<CaretSlot><Caret /></CaretSlot></TextTool>
              <Push />
              <TextTool type="button"><RedXIcon />Закрыть</TextTool>
            </Toolbar>
            <CanvasRow>
              <Palette>
                <PaletteTool type="button" aria-label="Соединитель"><ConnectorIcon /></PaletteTool>
                <PaletteTool type="button" aria-label="Блок"><BlockIcon /></PaletteTool>
                <PaletteRule />
                <PaletteTool type="button" aria-label="Подпись стрелки"><RelabelIcon /></PaletteTool>
                <PaletteTool type="button" aria-label="Рамка"><StampIcon /></PaletteTool>
                <PaletteRule />
                <PaletteTool type="button" aria-label="Связи"><LinkBoxesIcon /></PaletteTool>
              </Palette>
              <Canvas>
                <SheetRow>
                  <SheetArea><Diagram /></SheetArea>
                  <CanvasVScroll>
                    <BoxButton type="button" aria-label="Вверх"><Caret dir="up" c="#66666a" /></BoxButton>
                    <Track $grow={255} />
                    <BoxThumb $grow={331} />
                    <Track $grow={247} />
                    <BoxButton type="button" aria-label="Вниз"><Caret c="#66666a" /></BoxButton>
                  </CanvasVScroll>
                </SheetRow>
                <CanvasHScroll>
                  <BoxButton type="button" aria-label="Влево"><Caret dir="left" c="#66666a" /></BoxButton>
                  <Track $grow={394} />
                  <BoxThumb $grow={428} />
                  <Track $grow={402} />
                  <BoxButton type="button" aria-label="Вправо"><Caret dir="right" c="#66666a" /></BoxButton>
                </CanvasHScroll>
              </Canvas>
            </CanvasRow>
          </DiagramBody>
        </Dock>
      </Workspace>
    </Shell>
  );
}
